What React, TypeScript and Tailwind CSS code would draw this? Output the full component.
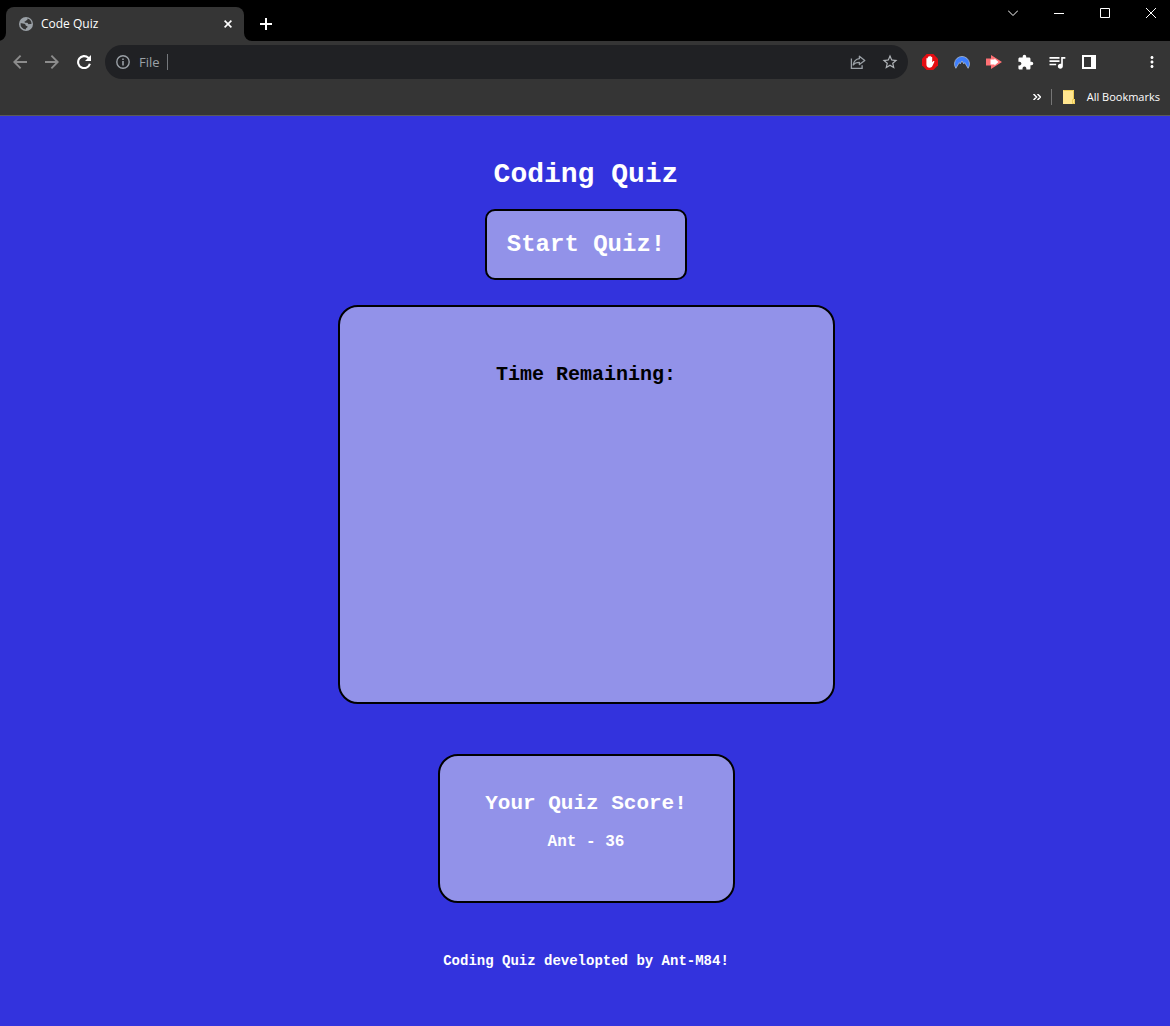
import React from "react";
import { MdExtension, MdMoreVert, MdQueueMusic, MdStarBorder } from "react-icons/md";

type IconButtonProps = {
  label: string;
  className?: string;
  children: React.ReactNode;
};

function IconButton({ label, className = "", children }: IconButtonProps) {
  return (
    <button
      type="button"
      aria-label={label}
      className={`flex h-8 w-8 shrink-0 items-center justify-center ${className}`}
    >
      {children}
    </button>
  );
}

function TabFoot({ className }: { className: string }) {
  return (
    <svg aria-hidden="true" viewBox="0 0 8 8" className={`absolute bottom-0 h-2 w-2 ${className}`}>
      <path d="M8 0v8H0a8 8 0 0 0 8-8Z" fill="#353535" />
    </svg>
  );
}

function TabStrip() {
  return (
    <div className="flex h-[41px] bg-black text-white">
      <div className="relative mt-[7px] ml-1.5 flex w-[238px] items-center rounded-t-lg bg-[#353535] pr-2 pl-3">
        <TabFoot className="-left-2" />
        <TabFoot className="-right-2 -scale-x-100" />
        <svg aria-hidden="true" viewBox="0 0 16 16" className="ml-px h-3.5 w-3.5 text-[#9aa0a6]">
          <circle cx="8" cy="8" r="8" fill="currentColor" />
          <path
            d="M9.6 1.8c.5 1.400-.3 1.900-1.500 2.100-.4.900-1.300.9-1.900 1.400.2 1.500 1.900 1.100 3.100 1.300.9.300 1 1.400 1.800 1.600 1 .1 1.900-.3 3.200-.1a6.300 6.300 0 0 0-4.700-6.300zM1.800 7.200c1.600.1 4 .1 5.100.9.700.6.400 1.600 1.200 2 .8.300 1.600.3 1.600 1.200-.1 1-1.700 1-1.800 1.900v1.100A6.300 6.300 0 0 1 1.800 7.200z"
            fill="#353535"
          />
        </svg>
        <span className="ml-2 text-[12px] leading-4">Code Quiz</span>
        <button type="button" aria-label="Close tab" className="ml-auto flex h-4 w-4 items-center justify-center">
          <svg viewBox="0 0 8 8" className="h-2 w-2" stroke="currentColor" strokeWidth="1.6">
            <path d="M.6.6l6.8 6.8M7.4.6L.6 7.4" />
          </svg>
        </button>
      </div>
      <IconButton label="New tab" className="mt-2 ml-1.5">
        <svg viewBox="0 0 12 12" className="h-3 w-3" stroke="currentColor" strokeWidth="2">
          <path d="M6 0v12M0 6h12" />
        </svg>
      </IconButton>
      <div className="ml-auto flex h-[26px] items-center">
        <button type="button" aria-label="Search tabs" className="flex h-full w-[46px] items-center justify-center">
          <svg viewBox="0 0 10 6" className="h-1.5 w-2.5" fill="none" stroke="currentColor">
            <path d="M0 .5l5 5 5-5" />
          </svg>
        </button>
        <button type="button" aria-label="Minimize" className="flex h-full w-[46px] items-center justify-center">
          <svg viewBox="0 0 10 10" className="h-2.5 w-2.5" fill="none" stroke="currentColor">
            <path d="M0 5.5h10" />
          </svg>
        </button>
        <button type="button" aria-label="Maximize" className="flex h-full w-[46px] items-center justify-center">
          <svg viewBox="0 0 10 10" className="h-2.5 w-2.5" fill="none" stroke="currentColor">
            <path d="M.5.5h9v9h-9z" />
          </svg>
        </button>
        <button type="button" aria-label="Close" className="flex h-full w-[42px] items-center justify-center pl-1">
          <svg viewBox="0 0 10 10" className="h-2.5 w-2.5" fill="none" stroke="currentColor">
            <path d="M0 0l10 10M10 0L0 10" />
          </svg>
        </button>
      </div>
    </div>
  );
}

function AddressBar() {
  return (
    <div className="mx-1.5 flex h-[34px] min-w-0 flex-1 items-center rounded-full bg-[#202124] pr-0.5 pl-[11px]">
      <svg aria-hidden="true" viewBox="0 0 14 14" className="h-3.5 w-3.5 shrink-0 text-[#9aa0a6]">
        <circle cx="7" cy="7" r="6.200" fill="none" stroke="currentColor" strokeWidth="1.400" />
        <path d="M6.200 6h1.600v4.500H6.200zM6.200 3.400h1.600v1.600H6.200z" fill="currentColor" />
      </svg>
      <label htmlFor="address" className="ml-[9px] text-[13px] leading-4 text-[#9aa0a6]">
        File
      </label>
      <span className="ml-[7px] h-4 w-px bg-[#75787c]" />
      <input id="address" type="text" className="h-6 min-w-0 flex-1 bg-transparent px-2 text-[13px] text-white outline-none" />
      <IconButton label="Share this page" className="text-[#9aa0a6]">
        <svg viewBox="0 0 16 16" className="h-4 w-4" fill="none" stroke="currentColor" strokeWidth="1.3">
          <path d="M1.400 4.500v9.800h10.700v-3" />
          <path d="M9.400 2.200l5.400 4.200-5.400 4.200V8.300c-3 0-4.900.8-6.200 2.700.5-3.600 2.600-5.900 6.200-6.400z" strokeLinejoin="round" />
        </svg>
      </IconButton>
      <IconButton label="Bookmark this tab" className="text-[#b0b4b8]">
        <MdStarBorder size={18} />
      </IconButton>
    </div>
  );
}

function Toolbar() {
  return (
    <div className="flex h-[42px] items-center bg-[#353535] pr-[3px] pl-1">
      <IconButton label="Back" className="text-[#8c8c8c]">
        <svg viewBox="0 0 14 14" className="h-3.5 w-3.5" fill="none" stroke="currentColor" strokeWidth="1.9">
          <path d="M14 7H1.500M7.600.7L1.300 7l6.300 6.300" />
        </svg>
      </IconButton>
      <IconButton label="Forward" className="text-[#8c8c8c]">
        <svg viewBox="0 0 14 14" className="h-3.5 w-3.5" fill="none" stroke="currentColor" strokeWidth="1.9">
          <path d="M0 7h12.500M6.400.7L12.700 7l-6.300 6.300" />
        </svg>
      </IconButton>
      <button type="button" aria-label="Reload" className="flex h-8 w-[31px] shrink-0 items-center justify-center text-white">
        <svg viewBox="0 0 14 14" className="h-3.5 w-3.5">
          <path d="M12.900 8.800A6 6 0 1 1 11.300 2.800l1 1" fill="none" stroke="currentColor" strokeWidth="2.100" />
          <path d="M14 0v6H8z" fill="currentColor" />
        </svg>
      </button>
      <AddressBar />
      <div className="flex">
        <IconButton label="Ad blocker">
          <svg viewBox="0 0 16 16" className="h-4 w-4">
            <path d="M4.700 0h6.600L16 4.700v6.600L11.300 16H4.700L0 11.300V4.700z" fill="#e40d12" />
            <path
              d="M4.400 8V4.600a.7.7 0 0 1 1.400 0V3.200a.75.75 0 0 1 1.500 0v-.6a.75.75 0 0 1 1.500 0v.8a.7.7 0 0 1 1.400 0v4.800l1-1c.6-.5 1.500 0 1.100.8l-1.900 4c-.6 1.200-1.500 1.700-2.700 1.700-2.300 0-3.300-1.500-3.300-3.500z"
              fill="#fff"
            />
          </svg>
        </IconButton>
        <IconButton label="VPN">
          <svg viewBox="0 0 16 14" className="h-3.5 w-4">
            <path
              d="M1.900 13.300A7.500 7.500 0 1 1 14.100 13.300L10.700 7.600l-.9 1.300L8 6 6.200 8.900l-.9-1.300z"
              fill="#3e7fff"
              stroke="#b8c4d6"
              strokeWidth=".7"
            />
          </svg>
        </IconButton>
        <button type="button" aria-label="Screen capture" className="flex h-8 w-[31px] items-center justify-center">
          <svg viewBox="0 0 16 14" className="h-3.5 w-4">
            <path d="M0 3.500h5V0l11 7-11 7v-3.500H0z" fill="#ff7074" />
            <path d="M4.500 4.500h4v-1l4 3.500-4 3.500v-1h-4z" fill="#fff" />
          </svg>
        </button>
        <IconButton label="Extensions" className="text-white">
          <MdExtension size={17} />
        </IconButton>
        <IconButton label="Media controls" className="text-white">
          <MdQueueMusic size={20} />
        </IconButton>
        <IconButton label="Side panel" className="text-white">
          <svg viewBox="0 0 14 14" className="h-3.5 w-3.5">
            <path fillRule="evenodd" d="M0 0h14v14H0zM2 2v10h7V2z" fill="currentColor" />
          </svg>
        </IconButton>
      </div>
      <button type="button" aria-label="Menu" className="ml-8 flex h-8 w-[30px] shrink-0 items-center justify-center text-white">
        <MdMoreVert size={18} />
      </button>
    </div>
  );
}

function BookmarksBar() {
  return (
    <div className="flex h-[33px] items-center justify-end border-b border-[#5a5a5a] bg-[#353535] pr-2.5 pb-1 text-white">
      <button type="button" aria-label="More bookmarks" className="mr-1.5 flex h-4 w-4 items-center justify-center">
        <svg viewBox="0 0 8 6" className="h-1.5 w-2" fill="none" stroke="currentColor" strokeWidth="1.5">
          <path d="M.5 0l3 3-3 3M4.500 0l3 3-3 3" />
        </svg>
      </button>
      <span className="h-4 w-px bg-[#767676]" />
      <button type="button" className="ml-[11px] flex items-center text-[11px] leading-4">
        <svg aria-hidden="true" viewBox="0 0 12 14" className="mr-3 h-3.5 w-3">
          <path d="M0 0h11v9h1v5H0z" fill="#ffe58f" />
          <path d="M.5.5h10v8.500M9.500 9.500v4h2v-4z" fill="none" stroke="#eccb55" />
        </svg>
        All Bookmarks
      </button>
    </div>
  );
}

export default function App() {
  return (
    <div className="flex min-h-screen flex-col bg-[#3333dd] font-['Open_Sans','Noto_Sans',sans-serif]">
      <header>
        <TabStrip />
        <Toolbar />
        <BookmarksBar />
      </header>
      <main className="flex flex-1 flex-col items-center pt-[43px] pr-4 pb-12 pl-[18px] font-['Liberation_Mono',monospace] text-white">
        <h1 className="text-[28px] leading-8 font-bold">Coding Quiz</h1>
        <button
          type="button"
          className="mt-[18px] rounded-[10px] border-2 border-black bg-[#9292e9] px-5 py-5 text-2xl leading-[27px] font-bold"
        >
          Start Quiz!
        </button>
        <section className="mt-[25px] min-h-[399px] w-full max-w-[497px] rounded-[20px] border-2 border-black bg-[#9292e9] px-5 pt-14 text-center">
          <p className="text-xl leading-6 font-bold text-black">Time Remaining:</p>
        </section>
        <section className="mt-[50px] min-h-[149px] w-full max-w-[297px] rounded-[20px] border-2 border-black bg-[#9292e9] px-5 pt-9 text-center">
          <h2 className="text-[21px] leading-6 font-bold">Your Quiz Score!</h2>
          <p className="mt-4 text-base leading-5 font-bold">Ant - 36</p>
        </section>
        <footer className="mt-12 text-sm leading-5 font-bold">Coding Quiz developted by Ant-M84!</footer>
      </main>
    </div>
  );
}
